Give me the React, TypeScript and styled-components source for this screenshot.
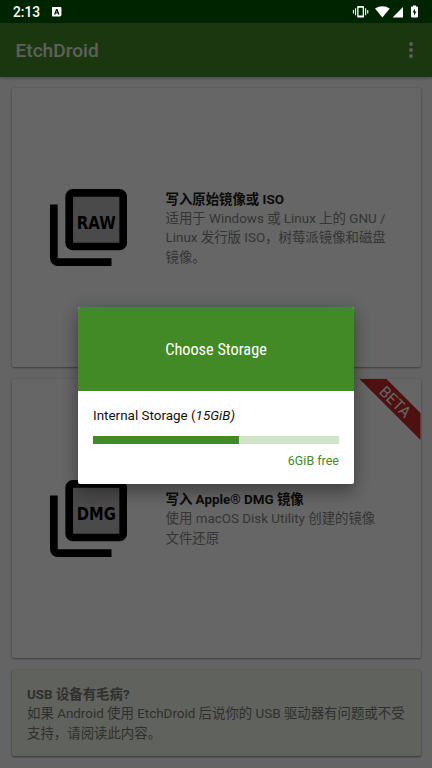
import React from "react";
import styled, { createGlobalStyle } from "styled-components";

const Global = createGlobalStyle`
  * { box-sizing: border-box; }
  html, body { margin: 0; padding: 0; }
  body { font-family: Roboto, "Noto Sans CJK SC", sans-serif; overflow: hidden; }
  p, h1, h2, h3 { margin: 0; }
`;

const Screen = styled.div`
  position: relative;
  width: 432px;
  height: 768px;
  display: flex;
  flex-direction: column;
  background: #f9f9f9;
  overflow: hidden;
`;

const StatusBar = styled.header`
  position: relative;
  z-index: 3;
  flex: none;
  height: 23px;
  display: flex;
  align-items: center;
  justify-content: space-between;
  padding: 1px 14px 0 13px;
  background: #002300;
  color: #fff;
`;

const StatusGroup = styled.div<{ $gap: number }>`
  display: flex;
  align-items: center;
  gap: ${(p) => p.$gap}px;
  svg { display: block; }
`;

const Clock = styled.span`
  font-size: 13.8px;
  line-height: 20px;
  font-weight: 500;
`;

const AppBar = styled.div`
  flex: none;
  height: 54px;
  display: flex;
  align-items: center;
  justify-content: space-between;
  padding: 0 18px 0 15.5px;
  background: #458a28;
  box-shadow: 0 1px 3px rgba(0, 0, 0, 0.3);
`;

const AppTitle = styled.h1`
  font-size: 19.1px;
  line-height: 24px;
  font-weight: 500;
  color: #e6ede3;
  padding-top: 2px;
`;

const Content = styled.main`
  display: flex;
  flex-direction: column;
  gap: 12px;
  padding: 11px 11.5px 0;
`;

const Card = styled.section`
  position: relative;
  height: 279px;
  flex: none;
  display: flex;
  align-items: center;
  background: #fff;
  border-radius: 2px;
  padding: 0 30px 0 38.5px;
  box-shadow: 0 1px 2px rgba(0, 0, 0, 0.36), 0 0 2px rgba(0, 0, 0, 0.12);
  overflow: hidden;
`;

const CardIcon = styled.div`
  flex: none;
  width: 77px;
  height: 77px;
  margin-right: 38.5px;
  svg { display: block; }
`;

const CardText = styled.div`
  flex: 1;
  padding-top: 2px;
`;

const Heading = styled.h2`
  font-size: 13.4px;
  line-height: 19px;
  font-weight: 700;
  color: #1c1c1c;
  white-space: nowrap;
`;

const Line = styled.p`
  font-size: 13.42px;
  line-height: 19.6px;
  color: #868686;
  white-space: nowrap;
`;

const HelpCard = styled.section`
  height: 86px;
  flex: none;
  background: #f1f5e9;
  border-radius: 2px;
  padding: 15px 15px 0 15.5px;
  box-shadow: 0 1px 2px rgba(0, 0, 0, 0.45), 0 0 2px rgba(0, 0, 0, 0.15);
  ${Heading} { color: #777970; }
  ${Line} { color: #777970; }
`;

const Ribbon = styled.div`
  position: absolute;
  top: 0;
  right: 0;
  width: 61px;
  height: 61px;
  overflow: hidden;
  clip-path: polygon(0 0, 27px 0, 61px 34px, 61px 61px);
  background: #c62828;
`;

const RibbonText = styled.span`
  position: absolute;
  left: 5px;
  top: 14px;
  width: 60px;
  text-align: center;
  font-size: 15.4px;
  line-height: 18px;
  color: #fff;
  transform: rotate(45deg);
`;

const Scrim = styled.div`
  position: absolute;
  inset: 0;
  z-index: 2;
  background: rgba(0, 0, 0, 0.6);
`;

const Dialog = styled.div`
  position: absolute;
  left: 78px;
  top: 307px;
  width: 276px;
  height: 177px;
  display: flex;
  flex-direction: column;
  background: #fff;
  border-radius: 2px;
  overflow: hidden;
  box-shadow: 0 8px 16px rgba(0, 0, 0, 0.3), 0 2px 18px rgba(0, 0, 0, 0.14);
`;

const DialogHeader = styled.div`
  flex: none;
  height: 84px;
  display: flex;
  align-items: center;
  justify-content: center;
  background: #428a25;
`;

const DialogTitle = styled.h2`
  font-family: "Roboto Condensed", Roboto, sans-serif;
  font-stretch: 75%;
  font-size: 16.3px;
  font-weight: 400;
  color: #fff;
  padding-top: 1px;
`;

const Storage = styled.div`
  display: flex;
  flex-direction: column;
  padding: 15px 15px 0;
`;

const StorageName = styled.p`
  font-size: 13.45px;
  line-height: 20px;
  color: #111;
`;

const Track = styled.div`
  margin-top: 10px;
  height: 8px;
  background: #d0e2c9;
`;

const Fill = styled.div`
  height: 100%;
  background: #428a25;
`;

const Free = styled.p`
  margin-top: 8px;
  font-size: 12.5px;
  line-height: 18px;
  text-align: right;
  color: #428a25;
`;

function LayersIcon({ label }: { label: string }) {
  return (
    <svg width="77" height="77" viewBox="0 0 77 77">
      <path d="M0 15.5H7.7V69.3H61.5V77H7.7A7.7 7.7 0 0 1 0 69.3Z" fill="#000" />
      <rect x="19.2" y="3.9" width="54" height="53.6" rx="3.8" fill="#bababa" stroke="#000" strokeWidth="7.7" />
      <text
        x="46.3"
        y="39.8"
        textAnchor="middle"
        textLength="39"
        lengthAdjust="spacingAndGlyphs"
        fontFamily="DejaVu Sans, sans-serif"
        fontWeight="700"
        fontSize="17.6"
      >
        {label}
      </text>
    </svg>
  );
}

export default function App() {
  const used = 59.2;
  return (
    <Screen>
      <Global />
      <StatusBar>
        <StatusGroup $gap={12}>
          <Clock>2:13</Clock>
          <svg width="10" height="10" viewBox="0 0 10 10">
            <path fillRule="evenodd" fill="#fff" d="M.7 0H8.6Q9.4 0 9.4.8V8.2L8.2 9.6H.7Q0 9.6 0 8.8V.8Q0 0 .7 0ZM4 2 2 7.6H3.4L3.8 6.5H5.7L6.1 7.6H7.5L5.5 2ZM4.7 3.7 5.3 5.4H4.2Z" />
          </svg>
        </StatusGroup>
        <svg width="66" height="14" viewBox="0 0 66 14">
          <g fill="#fff">
            <path fillRule="evenodd" d="M5.9 1H11.3Q12 1 12 1.7V11.7Q12 12.4 11.3 12.4H5.9Q5.2 12.4 5.2 11.7V1.7Q5.2 1 5.9 1ZM6.5 2.8V10.6H10.7V2.8Z" />
            <path d="M3 3.2H4.1V10.2H3ZM.9 5H2V8.6H.9ZM13.1 3.2H14.2V10.2H13.1ZM15.2 5H16.3V8.6H15.2Z" />
            <path d="M23 3.6Q30.4-1.2 37.8 3.6L30.4 12.4Z" />
            <path d="M40.6 12.4 51 2V12.4Z" />
            <path fillRule="evenodd" d="M61 1.5V.6H64V1.5H65.2Q66 1.5 66 2.3V11.6Q66 12.4 65.2 12.4H59.8Q59 12.4 59 11.6V2.3Q59 1.5 59.8 1.5ZM63 3.4 60.6 7.6H62V10.8L64.5 6.4H63Z" />
          </g>
        </svg>
      </StatusBar>
      <AppBar>
        <AppTitle>EtchDroid</AppTitle>
        <svg width="6" height="18" viewBox="0 0 6 18">
          <g fill="#dfe8dc">
            <circle cx="3" cy="3" r="2" />
            <circle cx="3" cy="9" r="2" />
            <circle cx="3" cy="15" r="2" />
          </g>
        </svg>
      </AppBar>
      <Content>
        <Card>
          <CardIcon>
            <LayersIcon label="RAW" />
          </CardIcon>
          <CardText>
            <Heading>写入原始镜像或 ISO</Heading>
            <Line>适用于 Windows 或 Linux 上的 GNU /</Line>
            <Line>Linux 发行版 ISO，树莓派镜像和磁盘</Line>
            <Line>镜像。</Line>
          </CardText>
        </Card>
        <Card>
          <CardIcon>
            <LayersIcon label="DMG" />
          </CardIcon>
          <CardText>
            <Heading>写入 Apple® DMG 镜像</Heading>
            <Line>使用 macOS Disk Utility 创建的镜像</Line>
            <Line>文件还原</Line>
          </CardText>
          <Ribbon>
            <RibbonText>BETA</RibbonText>
          </Ribbon>
        </Card>
        <HelpCard>
          <Heading>USB 设备有毛病?</Heading>
          <Line>如果 Android 使用 EtchDroid 后说你的 USB 驱动器有问题或不受</Line>
          <Line>支持，请阅读此内容。</Line>
        </HelpCard>
      </Content>
      <Scrim>
        <Dialog>
          <DialogHeader>
            <DialogTitle>Choose Storage</DialogTitle>
          </DialogHeader>
          <Storage>
            <StorageName>
              Internal Storage (<em>15GiB)</em>
            </StorageName>
            <Track>
              <Fill style={{ width: `${used}%` }} />
            </Track>
            <Free>6GiB free</Free>
          </Storage>
        </Dialog>
      </Scrim>
    </Screen>
  );
}
